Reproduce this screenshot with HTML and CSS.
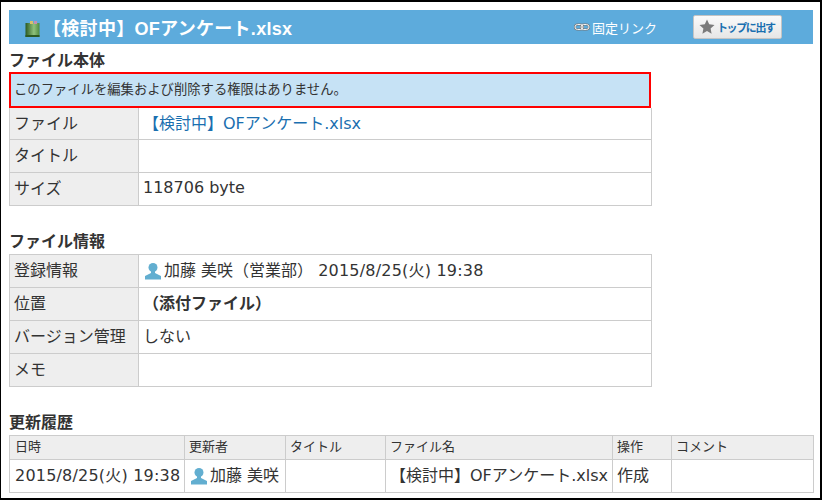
FILE: index.html
```html
<!DOCTYPE html>
<html lang="ja">
<head>
<meta charset="utf-8">
<title>ファイル詳細</title>
<link rel="stylesheet" href="styles.css">
</head>
<body>
<div class="frame">
  <header class="head">
    <svg class="file-icon" width="15" height="16" viewBox="0 0 15 16"><defs><linearGradient id="g" x1="0" x2="1" y1="0" y2="0"><stop offset="0" stop-color="#2c5a22"/><stop offset="0.6" stop-color="#8fc27c"/><stop offset="1" stop-color="#4f8a3f"/></linearGradient></defs><rect x="0.5" y="2" width="14" height="14" fill="url(#g)"/><rect x="0.5" y="14" width="14" height="2" fill="#2c5a22"/><rect x="5" y="0" width="3" height="3" fill="#d8c06a"/><rect x="9" y="0" width="3" height="3" fill="#c58fb0"/></svg>
    <h1 class="head-title">【検討中】OFアンケート.xlsx</h1>
    <a class="permalink"><svg class="link-icon" width="16" height="8" viewBox="0 0 16 8"><rect x="1" y="1.500" width="8" height="5" rx="2.500" fill="none" stroke="#777" stroke-width="2"/><rect x="7" y="1.500" width="8" height="5" rx="2.500" fill="none" stroke="#777" stroke-width="2"/><rect x="1" y="1.500" width="8" height="5" rx="2.500" fill="none" stroke="#f2f2f2" stroke-width="1"/><rect x="7" y="1.500" width="8" height="5" rx="2.500" fill="none" stroke="#f2f2f2" stroke-width="1"/></svg>固定リンク</a>
    <button class="top-btn"><svg width="16" height="15" viewBox="0 0 16 15"><path d="M8 0.5l2.2 4.8 5.3.6-3.9 3.600 1 5.200L8 12.100l-4.600 2.600 1-5.200L.5 5.900l5.300-.6z" fill="#7b7b7b"/></svg><span>トップに出す</span></button>
  </header>

  <h2 class="sec-title first">ファイル本体</h2>
  <div class="notice">このファイルを編集および削除する権限はありません。</div>
  <table class="info">
    <tr><th>ファイル</th><td><a class="link">【検討中】OFアンケート.xlsx</a></td></tr>
    <tr><th>タイトル</th><td></td></tr>
    <tr><th>サイズ</th><td>118706 byte</td></tr>
  </table>

  <h2 class="sec-title">ファイル情報</h2>
  <table class="info">
    <tr><th>登録情報</th><td><svg class="user" width="18" height="18" viewBox="0 0 18 18"><circle cx="9" cy="5.500" r="4.500" fill="#62aed0"/><path d="M7 9h4v2l6 3v3.500H1V14l6-3z" fill="#62aed0"/></svg>加藤 美咲（営業部） <span class="date">2015/8/25(火) 19:38</span></td></tr>
    <tr><th>位置</th><td class="strong">（添付ファイル）</td></tr>
    <tr><th>バージョン管理</th><td>しない</td></tr>
    <tr><th>メモ</th><td></td></tr>
  </table>

  <h2 class="sec-title">更新履歴</h2>
  <table class="history">
    <colgroup><col class="c1"><col class="c2"><col class="c3"><col class="c4"><col class="c5"><col class="c6"></colgroup>
    <tr><th>日時</th><th>更新者</th><th>タイトル</th><th>ファイル名</th><th>操作</th><th>コメント</th></tr>
    <tr><td><span class="date">2015/8/25(火) 19:38</span></td><td><svg class="user" width="18" height="18" viewBox="0 0 18 18"><circle cx="9" cy="5.500" r="4.500" fill="#62aed0"/><path d="M7 9h4v2l6 3v3.500H1V14l6-3z" fill="#62aed0"/></svg>加藤 美咲</td><td></td><td>【検討中】OFアンケート.xlsx</td><td>作成</td><td></td></tr>
  </table>
</div>
</body>
</html>
```
FILE: styles.css
```css
* { box-sizing: border-box; }
html, body { margin: 0; padding: 0; background: #fff; }
body {
  width: 822px;
  height: 500px;
  overflow: hidden;
  font-family: "DejaVu Sans", "Noto Sans CJK JP", sans-serif;
  color: #333;
}
.frame {
  width: 822px;
  height: 500px;
  border: 2px solid #000;
  border-left-width: 1px;
  padding: 8px 7px 0 8px;
}
.head {
  display: flex;
  align-items: center;
  height: 34px;
  background: #5dabdc;
  padding: 0 31px 0 16px;
}
.file-icon { flex: none; margin-top: 3px; }
.head-title {
  margin: 0 0 0 3px;
  font-family: "Liberation Sans", "Noto Sans CJK JP", sans-serif;
  font-size: 18px;
  font-weight: bold;
  color: #fff;
  flex: 1;
  letter-spacing: 0.3px;
  white-space: nowrap;
}
.permalink {
  display: flex;
  align-items: center;
  font-size: 13px;
  color: #fff;
  margin-right: 36px;
}
.link-icon { margin-right: 2px; }
.top-btn {
  display: flex;
  align-items: center;
  flex: none;
  width: 89px;
  height: 24px;
  padding: 0 0 0 5px;
  border: 1px solid #c4c4c4;
  border-radius: 2px;
  background: linear-gradient(#fafafa, #e6e6e6);
  font: bold 11px "Liberation Sans", "Noto Sans CJK JP", sans-serif;
  letter-spacing: -1.4px;
  white-space: nowrap;
  color: #1a6fb0;
  margin-top: -1px;
}
.top-btn span { margin-left: 2px; }
.sec-title {
  margin: 0;
  font-size: 16px;
  line-height: 20px;
  font-weight: bold;
  color: #333;
  padding-top: 7px;
  height: 28px;
}
.info + .sec-title { margin-top: 18px; height: 30px; padding-top: 8px; }
.notice {
  width: 642px;
  height: 36px;
  border: 2px solid #f00;
  background: #c6e2f5;
  font-size: 13.33px;
  line-height: 32px;
  padding-left: 3px;
}
table { border-collapse: collapse; table-layout: fixed; }
.info { width: 643px; }
.info th, .info td {
  height: 33px;
  border: 1px solid #ccc;
  font-size: 16px;
  font-weight: normal;
  padding: 0 4px 3px;
  text-align: left;
  white-space: nowrap;
}
.info th { width: 129px; background: #eee; }
.notice + .info tr:first-child th, .notice + .info tr:first-child td { border-top: 0; height: 31px; }
.link { color: #1a6fb0; }
.date { letter-spacing: 0.2px; }
.info .strong { font-weight: bold; }
.user { vertical-align: -4px; margin: 0 2px 0 1px; }
.history { width: 804px; }
.c1 { width: 175px; } .c2 { width: 101px; } .c3 { width: 100px; }
.c4 { width: 227px; } .c5 { width: 59px; } .c6 { width: 142px; }
.history th, .history td {
  border: 1px solid #ccc;
  padding: 0 4px 3px;
  text-align: left;
  white-space: nowrap;
  overflow: hidden;
}
.history th:first-child, .history td:first-child { padding-left: 5px; }
.history th { height: 24px; background: #eee; font-size: 13px; font-weight: normal; }
.history td { height: 33px; font-size: 16px; }
```
